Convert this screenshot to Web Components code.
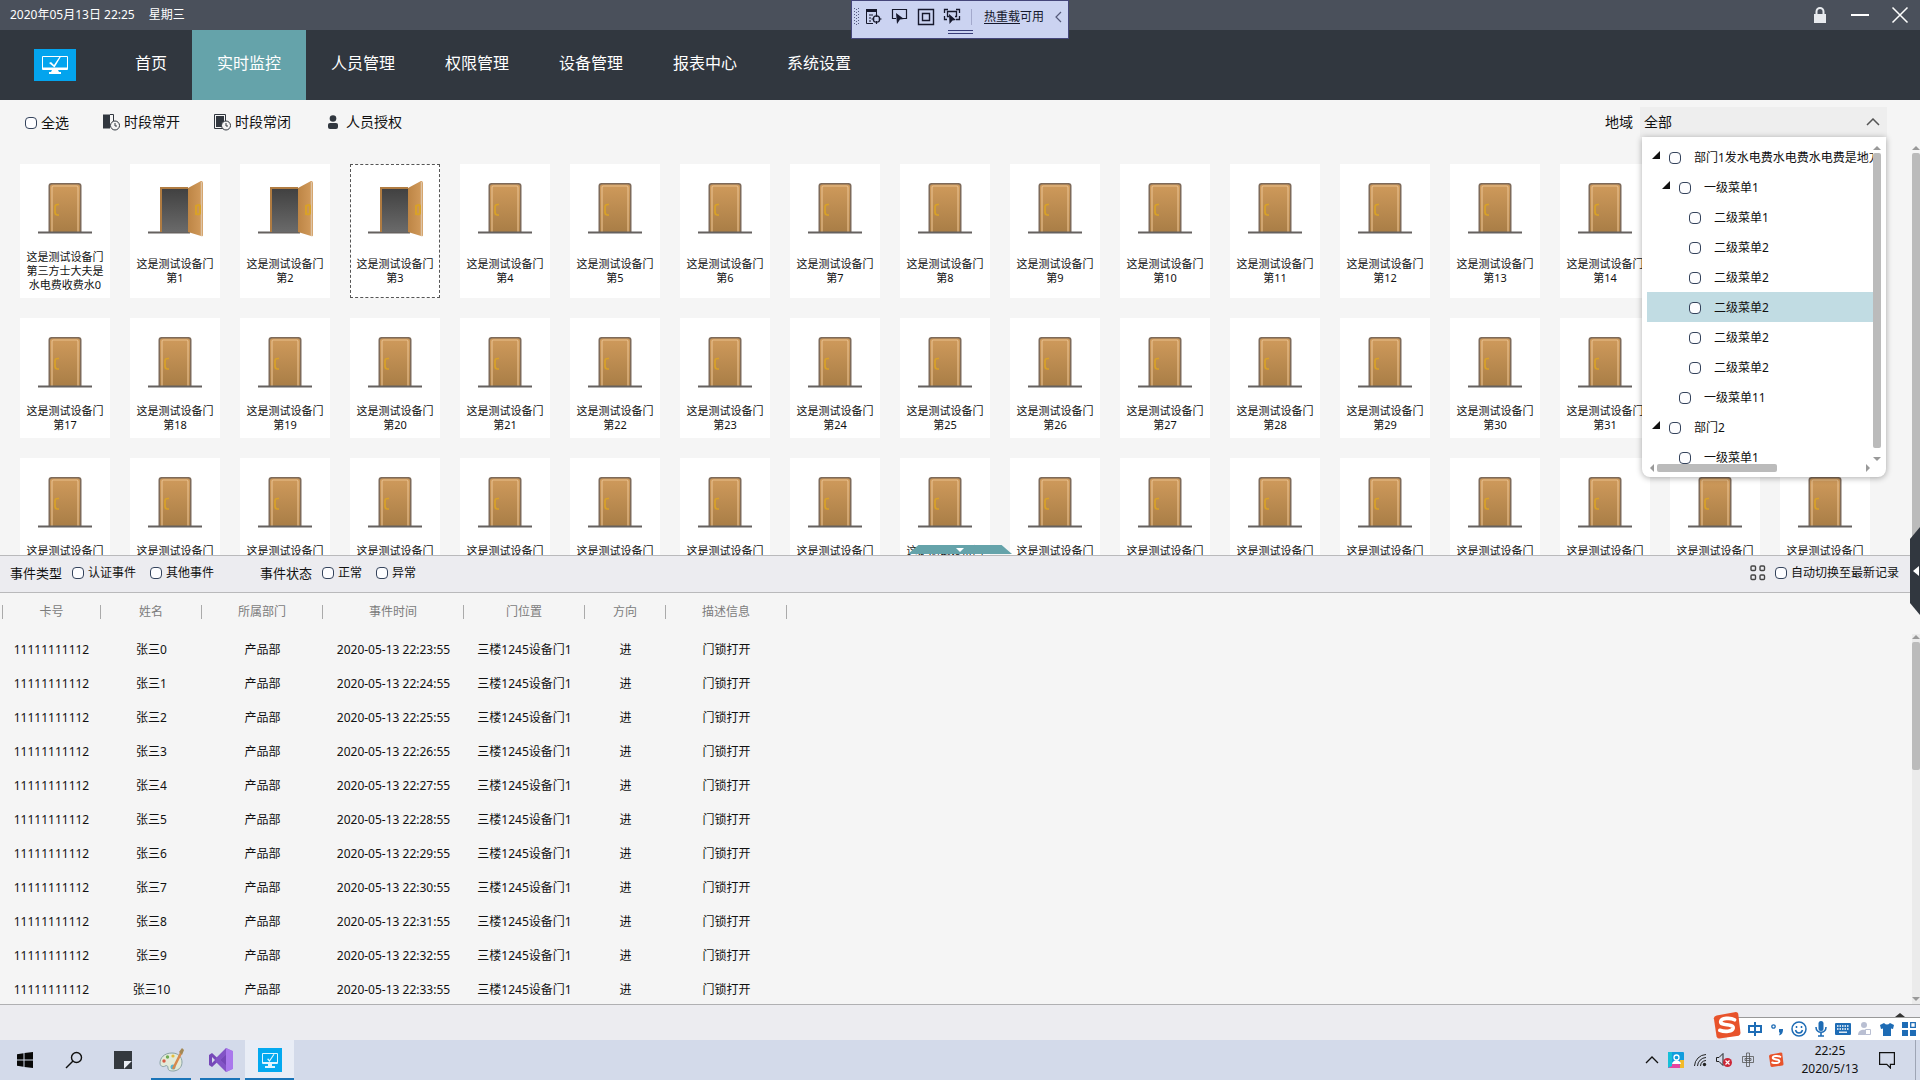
<!DOCTYPE html>
<html lang="zh-CN">
<head>
<meta charset="utf-8">
<title>实时监控</title>
<style>
html,body{margin:0;height:100%;overflow:hidden}
body{font:12px/16px "Noto Sans","Noto Sans CJK SC",sans-serif;color:#111;background:#f5f5f5}
</style>
</head>
<body>
<monitor-app></monitor-app>
<script>
const BASE = `*{box-sizing:border-box}button{font:inherit;color:inherit;background:none;border:0;padding:0;margin:0}a{color:inherit;text-decoration:none}svg{display:block}`;
class Base extends HTMLElement {
  connectedCallback() {
    if (this.shadowRoot) return;
    this.attachShadow({mode: 'open'}).innerHTML = `<style>${BASE}${this.css()}</style>${this.html()}`;
  }
}
const def = (name, css, html) => customElements.define(name, class extends Base {
  css() { return css; }
  html() { return html(this); }
});

/* Icons: [width, height, drawing] */
const monitor = `<g transform="translate(0 -2)"><g fill="none" stroke="#fff"><path d="M8.500 9.500h25v13h-25z" stroke-width="1"/><path d="M9 21.500h24" stroke-width="2"/></g><path d="M18 23h6l1 2h2v2H15v-2h2zM15 16l2-1 3 3 6-9 1 .6-6.500 11z" fill="#fff"/></g>`;
const clock = `<circle cx="13" cy="12.500" r="4.500" fill="#f5f5f5" stroke="#31373f"/><path d="M13 10v3h2" fill="none" stroke="#31373f"/>`;
const sogou = `<path d="M5 5 26 1q2 0 2.500 2l2.500 21q0 2-2 3L8 30q-2 0-3-2L2 8q0-2 3-3z" fill="#e8532b"/><path d="M24.500 9.500C20 7 10 7.500 9.500 11.500 9 16.500 23.500 13.500 23 18.500c-.5 4-9 4.500-14.500 2.500" fill="none" stroke="#fff" stroke-width="4" stroke-linecap="round"/>`;
const ICONS = {
  logo: [42, 32, `<path d="M0 0h42v32H0z" fill="#03a4ee"/>${monitor}`],
  app: [24, 24, `<path d="M0 0h24v24H0z" fill="#03a9f0"/><path d="M4.500 5.500h15v10h-15z" fill="none" stroke="#dff5ff"/><path d="M5 14h14v2H5zM10 16h4v2h3v2H7v-2h3zM9 11l1.500-.5 1 1.500 4-6 1 .5-5 7.500z" fill="#dff5ff"/>`],
  lock: [14, 18, `<path d="M1 8h12v9H1z" fill="#e8eaee"/><path d="M3.500 8V5.500a3.500 3.500 0 0 1 7 0V8" fill="none" stroke="#e8eaee" stroke-width="2"/>`],
  min: [18, 18, `<path d="M0 9h18" stroke="#fff" stroke-width="2"/>`],
  close: [18, 18, `<path d="m1.500 1.500 15 15m0-15-15 15" stroke="#fff" stroke-width="1.500"/>`],
  doorOpen: [18, 18, `<path d="M1 1.500h7v14H1z" fill="#31373f"/><path d="M8 1.500h3.500V8" fill="none" stroke="#31373f"/>${clock}`],
  doorShut: [18, 18, `<path d="M1.500 1.500h11v14h-11z" fill="#f5f5f5" stroke="#31373f"/><path d="M3 3h8v11H3z" fill="#31373f"/>${clock}`],
  person: [12, 14, `<circle cx="6" cy="3.500" r="3.300" fill="#31373f"/><path d="M1 12V9.500Q1 8 3 8h6q2 0 2 1.500V12q0 2-2 2H3q-2 0-2-2z" fill="#31373f"/>`],
  up: [14, 8, `<path d="m1 7 6-6 6 6" fill="none" stroke="#555" stroke-width="1.500"/>`],
  four: [16, 16, `<g fill="none" stroke="#444" stroke-width="1.400"><rect x="1" y="1" width="4.500" height="4.500" rx="1"/><rect x="10" y="1" width="4.500" height="4.500" rx="1"/><rect x="1" y="10" width="4.500" height="4.500" rx="1"/><rect x="10" y="10" width="4.500" height="4.500" rx="1"/></g>`],
  tri: [8, 8, `<path d="M8 0v8H0z" fill="#111"/>`],
  grip: [8, 18, `<g fill="#555a80">${[0,3,6,9,12,15].map(y => `<path d="M1 ${y}h1v1h-1zM5 ${y}h1v1h-1zM3 ${y+1}h1v1h-1z"/>`).join('')}</g>`],
  dev1: [18, 18, `<path d="M1 1h11v3H1z" fill="#16182c"/><path d="M1.500 2v13.500H8M4 7h4M4 10h2M4 13h2M11.500 4v2" fill="none" stroke="#16182c"/><circle cx="11.500" cy="11" r="3.200" fill="none" stroke="#16182c" stroke-width="1.300"/><path d="M11.500 6v3m0 4v3M6.500 11h3m4 0h3" stroke="#16182c" stroke-width="1.200"/>`],
  dev2: [18, 18, `<path d="M5 10.500H1.500v-9h14v9H11" fill="none" stroke="#16182c" stroke-width="1.200"/><path d="m5 5 8 6-4 .5L6 16z" fill="#16182c"/>`],
  dev3: [18, 18, `<path d="M1.500 1.500h15v15h-15zM5.500 5.500h7v7h-7z" fill="none" stroke="#16182c" stroke-width="1.400"/>`],
  dev4: [18, 18, `<path d="M1.500 5V1.500H5M13 1.500h3.500V5M1.500 8v3.500H4M16.500 8v3.500H13M6 8.500H4.500v-5h9v5H12" fill="none" stroke="#16182c" stroke-width="1.300"/><path d="m6 6 7 6-3.500.5L6.500 16z" fill="#16182c"/>`],
  left: [8, 12, `<path d="M7 1 2 6l5 5" fill="none" stroke="#555a7a" stroke-width="1.200"/>`],
  win: [16, 16, `<path d="M0 2.200 6.500 1.300v6.200H0zM7.500 1.100 16 0v7.500H7.500zM0 8.500h6.500v6.200L0 13.800zM7.500 8.500H16V16l-8.500-1.100z" fill="#080808"/>`],
  search: [18, 18, `<circle cx="11.500" cy="6.500" r="5" fill="none" stroke="#111" stroke-width="1.400"/><path d="M8 10 1 17" stroke="#111" stroke-width="1.500"/>`],
  note: [18, 18, `<path d="M0 0h18v10l-8 8H0z" fill="#34393f"/><path d="M10 18v-8h8z" fill="#e9edf4"/><path d="M18 10v8h-8z" fill="#34393f"/>`],
  paint: [26, 24, `<path d="M13 5C5 5 1 10 1 15c0 4 4 4 5 3 2-1 3 0 3 2 0 3 3 3 6 3 6-1 8-5 8-9 0-5-4-9-10-9z" fill="#e3ead9" stroke="#8ba3a5"/><circle cx="5" cy="13" r="1.700" fill="#d85b45"/><circle cx="8.500" cy="9" r="1.700" fill="#6fab54"/><circle cx="14" cy="8" r="1.600" fill="#e5bd3e"/><circle cx="14" cy="19" r="2.500" fill="#59b6d1"/><path d="M22 5 14 21" stroke="#d88a4d" stroke-width="2.500"/><path d="m20 4 3-4 2 2-2 5z" fill="#a48855"/>`],
  vs: [24, 24, `<path d="m0 7 3-2 15 14V5L3 19l-3-2z" fill="#7547b8"/><path d="m3 9 3 3-3 3z" fill="#d4daea"/><path d="M17 0 6 11l3 3 9-8v12L9 10l-3 3 11 11 6-3V3z" fill="#8253c6"/><path d="m17 0 7 3v18l-7 3z" fill="#a978ec"/>`],
  chev: [14, 8, `<path d="m1 7 6-6 6 6" fill="none" stroke="#111" stroke-width="1.300"/>`],
  photo: [16, 16, `<rect width="16" height="16" rx="1" fill="#139ddd"/><path d="M0 15 7 9l9 7H0z" fill="#e744a0"/><path d="M0 0h4v14l-4 2z" fill="#17c0d9"/><path d="M12 8h4v8h-4z" fill="#f2ba2b"/><circle cx="8.500" cy="5.500" r="2.500" fill="none" stroke="#fff" stroke-width="1.300"/><path d="M4 12c1-5 8-5 9 0z" fill="#fff"/>`],
  wifi: [14, 14, `<g fill="none" stroke="#222"><path d="M1.500 13A12 12 0 0 1 13 1.500M4.500 13A9 9 0 0 1 13 4.500M7.500 13A6 6 0 0 1 13 7.500"/></g><circle cx="11.500" cy="11.500" r="1.700" fill="#222"/>`],
  vol: [18, 16, `<path d="M1.500 5.500H4l4-4v12l-4-4H1.500z" fill="none" stroke="#222"/><circle cx="12.500" cy="10.500" r="4.500" fill="#cc2636"/><path d="m10.500 8.500 4 4m0-4-4 4" stroke="#fff" stroke-width="1.200"/>`],
  zhong: [14, 16, `<path d="M1.500 4.500h11v6h-11zM4 6.500h6v2H4zM5.500 1v13.500h3V1z" fill="none" stroke="#555" stroke-width=".8"/>`],
  sogou: [30, 30, `<g transform="scale(.92)">${sogou}</g>`],
  sogouS: [16, 16, `<g transform="scale(.5)">${sogou}</g>`],
  zhongB: [16, 16, `<path d="M2 5h12v6H2zM8 1v14" fill="none" stroke="#1e6cb5" stroke-width="2"/>`],
  punct: [14, 14, `<circle cx="3.500" cy="4.500" r="1.700" fill="none" stroke="#1e6cb5" stroke-width="1.300"/><path d="M9 7h4c0 4-1 5.500-4 6.500l1-3H9z" fill="#1e6cb5"/>`],
  smile: [16, 16, `<circle cx="8" cy="8" r="7" fill="none" stroke="#1e6cb5" stroke-width="1.500"/><path d="M5.500 5v2m5-2v2M4.500 9c1 4 6 4 7 0" fill="none" stroke="#1e6cb5" stroke-width="1.500"/>`],
  mic: [12, 16, `<rect x="3.500" width="5" height="10" rx="2.500" fill="#1e6cb5"/><path d="M1 6c0 7 10 7 10 0M6 11v4M3 15h6" fill="none" stroke="#1e6cb5" stroke-width="1.600"/>`],
  kb: [16, 12, `<rect width="16" height="12" rx="1" fill="#1e6cb5"/><path d="M2 3h12M2 6h12" stroke="#fff" stroke-width="1.500" stroke-dasharray="1.500 1"/><path d="M4 9.200h8" stroke="#fff" stroke-width="1.300"/>`],
  user: [16, 16, `<circle cx="7" cy="4" r="3" fill="#b9bfd2"/><path d="M1 14c0-7 11-7 12 0z" fill="#b9bfd2"/><path d="M8.500 8.500h5v5h-5z" fill="#fff" stroke="#b9bfd2"/>`],
  shirt: [14, 14, `<path d="M0 3 4 1c2 2 4 2 6 0l4 2-1 4-2-.5V14H3V6.500L1 7z" fill="#1e6cb5"/>`],
  apps: [14, 14, `<path d="M0 0h6v6H0zM0 8h6v6H0zM8 8h6v6H8z" fill="#1e6cb5"/><path d="M8.700.7h4.600v4.600H8.700z" fill="#fff" stroke="#1e6cb5" stroke-width="1.300"/>`],
  bubble: [20, 18, `<path d="M2.600 1.600h14.800v11.800h-4V17l-3.600-3.600H2.600z" fill="none" stroke="#111" stroke-width="1.200"/>`],
  door: [58, 58, `<defs><linearGradient id="w" x2="0" y2="1"><stop stop-color="#cf9a5b"/><stop offset="1" stop-color="#a87d46"/></linearGradient><filter id="b" x="-.2" y="-2" width="1.400" height="5"><feGaussianBlur stdDeviation="1"/></filter></defs><path d="M4 55h50" stroke="#999" stroke-width="2" filter="url(#b)" opacity=".6"/><path d="M12.500 54V7q0-3 3-3h27q3 0 3 3v47z" fill="#7d6a5a"/><path d="M14 54V7.500q0-2 2-2h26q2 0 2 2V54z" fill="url(#w)"/><path d="M16 54V8.500q0-1.500 1.500-1.500h23q1.500 0 1.500 1.500V54" fill="none" stroke="#e6bd8a" stroke-width="1.200"/><path d="M23 25.500h-1.500q-2.500 0-2.500 2.500v5q0 3 2.500 3H23" fill="none" stroke="#d9a127" stroke-width="1.700"/><path d="M2 53.500h54" stroke="#65615f" stroke-width="2"/>`],
  doorO: [58, 58, `<defs><linearGradient id="w" x2="1"><stop stop-color="#bd8545"/><stop offset="1" stop-color="#d39c5d"/></linearGradient><linearGradient id="g" x2="0" y2="1"><stop stop-color="#414141"/><stop offset="1" stop-color="#6a6a6a"/></linearGradient><filter id="b" x="-.2" y="-2" width="1.400" height="5"><feGaussianBlur stdDeviation="1"/></filter></defs><path d="M4 55.500h50" stroke="#999" stroke-width="2" filter="url(#b)" opacity=".6"/><path d="M2 53.500h42" stroke="#65615f" stroke-width="2"/><path d="M14 53V8h28v45z" fill="#b07c42"/><path d="M16 53V10h26v43z" fill="url(#g)"/><path d="M42 9 55 2q2 0 2 2v52q0 2-2 1l-13-4z" fill="url(#w)"/><path d="M55.500 3v54" stroke="#dfc4a4" stroke-width="1.500"/><path d="M50 27q4-2 4 0v7q0 2-4 1z" fill="none" stroke="#d9a127" stroke-width="2"/>`]
};
def('ui-icon', `:host{display:block;flex:none}`, el => {
  const [w, h, d] = ICONS[el.getAttribute('name')];
  return `<svg width="${w}" height="${h}" viewBox="0 0 ${w} ${h}" aria-hidden="true">${d}</svg>`;
});
const icon = n => `<ui-icon name="${n}"></ui-icon>`;

def('check-box', `:host{display:block;flex:none}label{display:flex;align-items:center;gap:var(--gap,4px);white-space:nowrap}
input{appearance:none;width:12px;height:12px;margin:0;border:1px solid #34435c;border-radius:4px;background:#fdfdff;flex:none}`,
  () => `<label><input type="checkbox"><slot></slot></label>`);

def('scroll-bar', `:host{display:flex;flex-direction:column;align-items:center;width:8px;flex:none;background:var(--track,transparent)}
:host([across]){flex-direction:row;width:auto;height:8px}
i{border:4px solid transparent;flex:none}.a{border-bottom-color:#999;border-top:0}.z{border-top-color:#999;border-bottom:0}
:host([across]) .a{border:4px solid transparent;border-right-color:#999;border-left:0}:host([across]) .z{border:4px solid transparent;border-left-color:#999;border-right:0}
.t{flex:1;align-self:stretch;margin:3px 0;min-height:0}:host([across]) .t{margin:0 3px}
b{display:block;background:#bbb;border-radius:2px;height:var(--size,100%)}:host([across]) b{height:8px;width:var(--size)}`,
  () => `<i class="a"></i><div class="t"><b></b></div><i class="z"></i>`);

def('title-bar', `:host{display:flex;align-items:center;height:30px;padding:0 11px 0 10px;background:#4a505b;color:#fff;flex:none;gap:14px}
.r{margin-left:auto;display:flex;gap:22px;align-items:center}button{display:block}button:first-child{margin-right:2px}`,
  () => `<span>2020年05月13日 22:25</span><span>星期三</span><div class="r"><button aria-label="锁定">${icon('lock')}</button><button aria-label="最小化">${icon('min')}</button><button aria-label="关闭">${icon('close')}</button></div>`);

def('main-nav', `:host{display:flex;height:70px;background:#31373f;color:#fff;flex:none;font-size:16px;line-height:24px}
ui-icon{margin:19px 34px 0}nav{display:flex}a{padding:21px 25px 0}a[aria-current]{background:#65a3aa}`,
  () => `${icon('logo')}<nav>${['首页','实时监控','人员管理','权限管理','设备管理','报表中心','系统设置'].map((t, i) => `<a href="#"${i == 1 ? ' aria-current="page"' : ''}>${t}</a>`).join('')}</nav>`);

def('dev-toolbar', `:host{position:absolute;top:0;left:50%;transform:translateX(-50%);width:218px;height:39px;background:#cbd3f1;border:1px solid #45467a;display:flex;flex-direction:column;align-items:center;color:#16182c}
.r{display:flex;align-items:center;gap:8px;padding:4px 6px 0 1px;height:28px;align-self:stretch}.r>:first-child{margin-right:-4px}.r>:last-child{margin-left:auto}.s{width:1px;height:16px;background:#a3a9cc;margin:0 4px 0 2px}u{text-underline-offset:2px}
.h{width:25px;height:4px;border:solid #383c78;border-width:1px 0;margin-top:1px}`,
  () => `<div class="r">${['grip','dev1','dev2','dev3','dev4'].map(icon).join('')}<i class="s"></i><span><u>热重载</u>可用</span>${icon('left')}</div><i class="h"></i>`);

def('tool-strip', `:host{display:flex;align-items:center;height:44px;padding:0 33px 0 25px;font-size:14px;line-height:20px;flex:none}
button{display:flex;align-items:center;gap:4px;margin-left:33px}button.p{gap:7px;margin-left:36px}check-box{padding-top:2px}
.r{margin-left:auto;display:flex;align-items:center;gap:7px}.c{display:flex;align-items:center;position:relative;width:247px;height:30px;background:#eee}
select{appearance:none;width:100%;height:30px;border:0;background:none;font:inherit;color:#111;padding:0 4px}.c>ui-icon{position:absolute;right:7px}`,
  () => `<check-box>全选</check-box><button>${icon('doorOpen')}时段常开</button><button>${icon('doorShut')}时段常闭</button><button class="p">${icon('person')}人员授权</button>
<div class="r"><label for="area">地域</label><div class="c"><select id="area"><option>全部</option></select>${icon('up')}<area-tree></area-tree></div></div>`);

const TREE = [[0,'部门1发水电费水电费水电费是地方',1],[1,'一级菜单1',1],[2,'二级菜单1'],[2,'二级菜单2'],[2,'二级菜单2'],[2,'二级菜单2',0,1],[2,'二级菜单2'],[2,'二级菜单2'],[1,'一级菜单11'],[0,'部门2',1],[1,'一级菜单1']];
def('area-tree', `:host{position:absolute;top:30px;left:2px;right:1px;z-index:5;height:340px;background:#fff;border-radius:0 0 8px 8px;box-shadow:0 1px 6px #0005;padding:5px;display:flex;font-size:12px;line-height:16px}
.m{flex:1;min-width:0;display:flex;flex-direction:column}.l{height:322px;overflow:hidden}
.n{height:30px;display:flex;align-items:center;padding:2px 0 0 calc(5px + var(--d)*10px);gap:9px;--gap:13px}.n[s]{background:#c1dce3}.n>span{width:8px;margin-top:-6px}
scroll-bar{--track:#fff}.v{padding:4px 0 11px;--size:295px}`,
  () => `<div class="m"><div class="l">${TREE.map(([d, t, e, s]) => `<div class="n" style="--d:${d}"${s ? ' s' : ''}><span>${e ? icon('tri') : ''}</span><check-box>${t}</check-box></div>`).join('')}</div><scroll-bar across style="--size:120px;margin:0 3px"></scroll-bar></div><scroll-bar class="v"></scroll-bar>`);

def('door-card', `:host{display:flex;flex-direction:column;align-items:center;background:#fff;padding:15px 5px 6px;text-align:center;font-size:11px;line-height:14px}
:host([selected]){outline:1px dashed #555;outline-offset:-1px}.t{flex:1;display:flex;align-items:center;padding-top:13px;width:80px}span{width:100%}`,
  el => `${icon(el.hasAttribute('open') ? 'doorO' : 'door')}<div class="t"><span><slot></slot></span></div>`);

def('door-grid', `:host{display:flex;flex:1;min-height:0;position:relative}
.g{flex:1;overflow:hidden;display:grid;grid-template-columns:repeat(auto-fill,90px);gap:20px;padding:20px 20px 0;align-content:start}
scroll-bar{--size:640px;padding-top:2px;height:720px}.tab{position:absolute;bottom:1px;left:50%;transform:translateX(-50%);width:104px;height:9px;background:#65a3aa;clip-path:polygon(10% 0,90% 0,100% 100%,0 100%);display:flex;justify-content:center;padding-top:3px}
.tab i{border:4px solid transparent;border-top:4px solid #fff;border-bottom:0;height:0}.w{overflow:hidden;display:flex}`,
  () => `<div class="g">${Array.from({length: 51}, (_, i) => `<door-card${i > 0 && i < 4 ? ' open' : ''}${i == 3 ? ' selected' : ''}>这是测试设备门第${i ? i : '三方士大夫是水电费收费水0'}</door-card>`).join('')}</div><div class="w"><scroll-bar></scroll-bar></div><button class="tab" aria-label="收起"><i></i></button>`);

def('event-filter', `:host{display:flex;align-items:center;height:38px;padding:0 21px 2px 10px;background:#ececf0;border:solid #b9b9bb;border-width:1px 0;flex:none;box-sizing:border-box}
b{font-weight:400;font-size:13px;margin-right:10px}check-box+check-box{margin-left:14px}check-box+b{margin-left:46px}.r{margin-left:auto;display:flex;gap:9px;align-items:center}`,
  () => `<b>事件类型</b><check-box>认证事件</check-box><check-box>其他事件</check-box><b>事件状态</b><check-box>正常</check-box><check-box>异常</check-box><div class="r"><button aria-label="视图">${icon('four')}</button><check-box>自动切换至最新记录</check-box></div>`);

const COLS = [['卡号',99],['姓名',101],['所属部门',121],['事件时间',141],['门位置',121],['方向',81],['描述信息',121]];
def('event-table', `:host{display:flex;flex:1;min-height:0;justify-content:space-between;overflow:hidden}
table{border-collapse:collapse;table-layout:fixed;width:785px;margin-left:2px;align-self:flex-start}th,td{padding:0;text-align:center;font-weight:400;white-space:nowrap}
th{height:40px;padding-bottom:2px;color:#7c7c7c}th span{display:block;height:14px;line-height:14px;border-right:1px solid #aaa}th:first-child span{border-left:1px solid #aaa}td{height:34px}
scroll-bar{margin-top:41px;padding:1px 0 3px;--track:#ebebeb;--size:128px}`,
  () => `<table><colgroup>${COLS.map(c => `<col style="width:${c[1]}px">`).join('')}</colgroup><thead><tr>${COLS.map(c => `<th scope="col"><span>${c[0]}</span></th>`).join('')}</tr></thead><tbody>${Array.from({length: 11}, (_, i) => `<tr><td>11111111112</td><td>张三${i}</td><td>产品部</td><td>2020-05-13 22:${23 + i}:55</td><td>三楼1245设备门1</td><td>进</td><td>门锁打开</td></tr>`).join('')}</tbody></table><scroll-bar></scroll-bar>`);

def('side-tab', `:host{position:absolute;right:0;top:527px;width:10px;height:88px;background:#31373f;clip-path:polygon(100% 0,0 12px,0 76px,100% 100%);display:flex;align-items:center;justify-content:flex-end}
i{border:5px solid transparent;border-right:6px solid #fff;border-left:0;margin-right:1px}button{display:flex}`,
  () => `<button aria-label="展开侧栏"><i></i></button>`);

def('ime-bar', `:host{position:absolute;right:0;bottom:40px;height:23px;display:flex;align-items:center;background:linear-gradient(#fff,#fff) 15px 0 no-repeat;z-index:2}
:host::before{content:"";position:absolute;left:15px;right:0;top:0;border-top:1px solid #999}
:host::after{content:"";position:absolute;right:15px;top:-4px;border:5px solid transparent;border-bottom:4px solid #333;border-top:0}
span{width:22px;display:flex;justify-content:center}span:first-of-type{width:32px;justify-content:flex-start;position:relative;z-index:1;margin-top:-6px}`,
  () => ['sogou','zhongB','punct','smile','mic','kb','user','shirt','apps'].map(n => `<span>${icon(n)}</span>`).join(''));

def('task-bar', `:host{display:flex;height:40px;background:#d3daea;flex:none}
.a{display:flex}.a button{width:49px;height:40px;display:flex;align-items:center;justify-content:center;position:relative}
.a .run::after{content:"";position:absolute;left:4px;right:5px;bottom:0;height:2px;background:#1a74b8}.a .on{background:#e9edf6}.a .on::after{left:0;right:0}
.t{margin-left:auto;display:flex;align-items:center;padding-right:4px}.t button{width:24px;height:40px;display:flex;align-items:center;justify-content:center}.t .s{width:31px}
.c{width:78px;text-align:center;line-height:18px}.t .n{width:35px}.e{width:1px;height:40px;background:#9ea5b5;margin-left:11px}`,
  () => `<div class="a">${[['win','开始'],['search','搜索'],['note','便笺'],['paint','画图','run'],['vs','开发工具','run'],['app','门禁','run on']].map(([n, l, c]) => `<button aria-label="${l}" class="${c || ''}">${icon(n)}</button>`).join('')}</div>
<div class="t">${['chev','photo','wifi','vol','zhong'].map(n => `<button aria-label="托盘">${icon(n)}</button>`).join('')}<button class="s" aria-label="输入法">${icon('sogouS')}</button><div class="c">22:25<br>2020/5/13</div><button class="n" aria-label="通知">${icon('bubble')}</button><i class="e"></i></div>`);

def('monitor-app', `:host{display:flex;flex-direction:column;height:100vh;position:relative;overflow:hidden}
section{display:flex;flex-direction:column;min-height:0}.top{flex:455 1 0}.bot{flex:449 1 0}.foot{height:36px;background:#ececf0;border-top:1px solid #b0b0b2;flex:none}tool-strip{position:relative;z-index:3}`,
  () => `<title-bar></title-bar><main-nav></main-nav><section class="top"><tool-strip></tool-strip><door-grid></door-grid></section><section class="bot"><event-filter></event-filter><event-table></event-table></section><div class="foot"></div><task-bar></task-bar><ime-bar></ime-bar><side-tab></side-tab><dev-toolbar></dev-toolbar>`);
</script>
</body>
</html>
